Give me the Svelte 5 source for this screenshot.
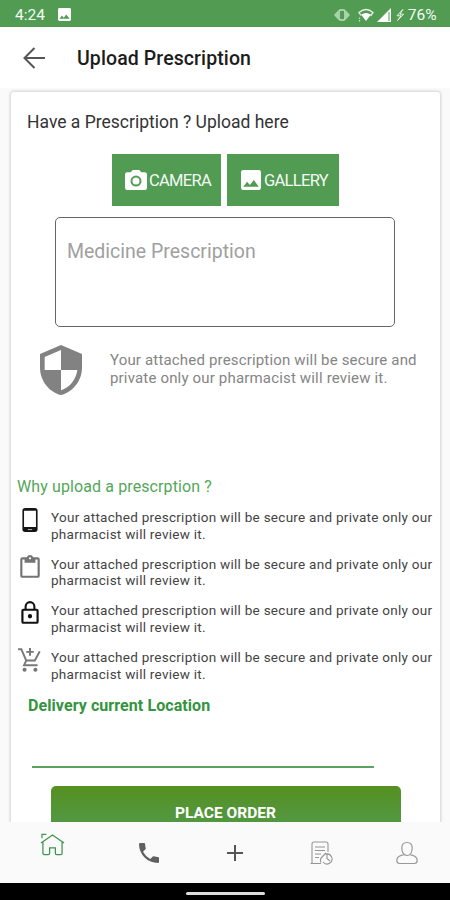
<script lang="ts">
  // Reasons listed under "Why upload"
  const reasons = ['phone', 'clipboard', 'lock', 'cart'];
  const reasonText = ['Your attached prescription will be secure and private only our', 'pharmacist will review it.'];

  let prescription = $state('');
</script>

<div class="screen">
  <header class="status">
    <span class="time">4:24</span>
    <svg class="picture" viewBox="3 3 18 18" width="13" height="13">
      <path fill="#fff" d="M21 19V5a2 2 0 0 0-2-2H5a2 2 0 0 0-2 2v14a2 2 0 0 0 2 2h14a2 2 0 0 0 2-2zM8.500 13.500l2.500 3 3.500-4.500 4.500 6H5z" />
    </svg>
    <div class="system">
      <svg class="vibrate" viewBox="0 0 16 12" width="16" height="12">
        <path fill="#a9d3aa" d="M4 1.500v9L0 6zM12 1.500v9L16 6z" />
        <rect x="5" y="1" width="6" height="10" rx="1.500" fill="none" stroke="#c5e2c5" stroke-width="1.500" />
      </svg>
      <svg class="wifi" viewBox="0 0 16 14" width="16" height="14">
        <path d="M3 7.500L1 4.500Q8-1.500 15 4.500L12.500 8" fill="none" stroke="#e4f2e4" stroke-width="1.300" />
        <path d="M3 6.500Q8 3.500 13 6.500L8 13z" fill="#fff" />
        <path d="M1.500 9.500v1.500M1.500 12v1.500" stroke="#c5e2c5" stroke-width="1.300" />
      </svg>
      <svg class="signal" viewBox="0 0 14 14" width="14" height="14">
        <path d="M14 0v14H0z" fill="#fff" />
        <path d="M12 4v9" stroke="#519b53" stroke-width="1" />
      </svg>
      <svg class="bolt" viewBox="0 0 8 12" width="8" height="12">
        <path d="M6.800.5L1 6.800h4L1.500 11.500M6.800.5L4 5.200h3.600L1.500 11.500" fill="none" stroke="#e8f5e8" stroke-width="1" />
      </svg>
      <span class="battery">76%</span>
    </div>
  </header>

  <div class="toolbar">
    <button class="back" aria-label="Back">
      <svg viewBox="0 0 22 22" width="22" height="22">
        <path d="M11.500 1L1.500 11l10 10M1.500 11H22" fill="none" stroke="#555" stroke-width="2" />
      </svg>
    </button>
    <h1>Upload Prescription</h1>
  </div>

  <main>
    <section class="card">
      <h2>Have a Prescription ? Upload here</h2>

      <div class="actions">
        <button class="camera">
          <svg viewBox="2 2 20 18" width="22" height="20">
            <path fill="#fff" fill-rule="evenodd" d="M9 2L7.200 4H4a2 2 0 0 0-2 2v12a2 2 0 0 0 2 2h16a2 2 0 0 0 2-2V6a2 2 0 0 0-2-2h-3.200L15 2zM12 17a5 5 0 1 1 0-10 5 5 0 0 1 0 10z" />
            <circle cx="12" cy="12" r="3.200" fill="#fff" />
          </svg>
          <span>CAMERA</span>
        </button>
        <button class="gallery">
          <svg viewBox="3 3 18 18" width="20" height="20">
            <path fill="#fff" d="M21 19V5a2 2 0 0 0-2-2H5a2 2 0 0 0-2 2v14a2 2 0 0 0 2 2h14a2 2 0 0 0 2-2zM8.500 13.500l2.500 3 3.500-4.500 4.500 6H5z" />
          </svg>
          <span>GALLERY</span>
        </button>
      </div>

      <textarea bind:value={prescription} placeholder="Medicine Prescription"></textarea>

      <div class="secure">
        <svg viewBox="3 1 18 22" width="42" height="50" preserveAspectRatio="none">
          <path fill="#828282" d="M12 1L3 5v6c0 5.550 3.840 10.740 9 12 5.160-1.260 9-6.450 9-12V5zm0 10.990h7c-.53 4.120-3.280 7.790-7 8.940V12H5V6.300l7-3.110z" />
        </svg>
        <p>Your attached prescription will be secure and<br />private only our pharmacist will review it.</p>
      </div>

      <h3>Why upload a prescrption ?</h3>

      <ul>
        {#each reasons as icon}
          <li>
            <svg viewBox="0 0 24 24" width="26" height="26">
              {#if icon === 'phone'}
                <path fill="#151515" fill-rule="evenodd" d="M7.500 1h9A2.500 2.500 0 0 1 19 3.500v17a2.500 2.500 0 0 1-2.500 2.500h-9A2.500 2.500 0 0 1 5 20.500v-17A2.500 2.500 0 0 1 7.500 1zM6.500 3.500v15h11v-15z" />
                <path d="M10 20.800h4" stroke="#aaa" stroke-width="1" />
              {:else if icon === 'clipboard'}
                <path fill="#747474" d="M19 3h-4.180C14.400 1.840 13.300 1 12 1s-2.400.84-2.820 2H5a2 2 0 0 0-2 2v15a2 2 0 0 0 2 2h14a2 2 0 0 0 2-2V5a2 2 0 0 0-2-2zm-7 0a1 1 0 1 1 0 2 1 1 0 0 1 0-2zm7 17H5V5h2v3h10V5h2z" />
              {:else if icon === 'lock'}
                <path fill="#111" d="M18 8h-1V6A5 5 0 0 0 7 6v2H6a2 2 0 0 0-2 2v10a2 2 0 0 0 2 2h12a2 2 0 0 0 2-2V10a2 2 0 0 0-2-2zM8.900 6a3.100 3.100 0 0 1 6.200 0v2H8.900zM18 20H6V10h12zm-6-3a2 2 0 1 0 0-4 2 2 0 0 0 0 4z" />
              {:else}
                <path d="M1 2h3l4.500 10.500h8l4.500-8.500M12 1v7M8.500 4.500h7M8.500 12.500L6.500 16.800H19" fill="none" stroke="#777" stroke-width="1.800" />
                <circle cx="7" cy="21" r="1.900" fill="#777" />
                <circle cx="17" cy="21" r="1.900" fill="#777" />
              {/if}
            </svg>
            <p>{reasonText[0]}<br />{reasonText[1]}</p>
          </li>
        {/each}
      </ul>

      <h4>Delivery current Location</h4>
      <div class="location"></div>
      <button class="order">PLACE ORDER</button>
    </section>
  </main>

  <nav>
    <a class="home" href="#home" aria-label="Home">
      <svg viewBox="0 0 26 24" width="25" height="23" fill="none" stroke="#3d9650" stroke-width="1.300">
        <path d="M1 10.500L13 2l12 8.500M2 5.500V1.500h4.500M3 9.500V21q0 1.500 1.500 1.500H8.500q1.500 0 1.500-1.500V15.500h6V21q0 1.500 1.500 1.500H21.500q1.500 0 1.500-1.500V9.500" />
      </svg>
    </a>
    <a href="#call" aria-label="Call">
      <svg viewBox="3 3 18 18" width="20" height="20">
        <path fill="#606060" d="M6.620 10.790a15.150 15.150 0 0 0 6.590 6.590l2.200-2.200a1 1 0 0 1 1.020-.24c1.120.37 2.330.57 3.570.57a1 1 0 0 1 1 1V20a1 1 0 0 1-1 1A17 17 0 0 1 3 4a1 1 0 0 1 1-1h3.500a1 1 0 0 1 1 1c0 1.250.2 2.450.57 3.570a1 1 0 0 1-.25 1.020z" />
      </svg>
    </a>
    <a href="#add" aria-label="Add">
      <svg viewBox="0 0 16 16" width="16" height="16">
        <path d="M8 0v16M0 8h16" stroke="#555" stroke-width="2" />
      </svg>
    </a>
    <a href="#orders" aria-label="Orders">
      <svg viewBox="0 0 24 24" width="24" height="24" fill="none" stroke="#969696" stroke-width="1.100">
        <path d="M12 22.500H1.500M3 22.500V3q0-2 2-2h12q2 0 2 2v8M6 6h10M6 9.500h10M6 13h6M6 16.500h4" />
        <path d="M16.500 13.200A5 5 0 1 1 14 21M18 12.500v5l3 2.500M12 21.500q-1.500-3 1-5.500l4-4" />
      </svg>
    </a>
    <a href="#profile" aria-label="Profile">
      <svg viewBox="0 0 22 24" width="22" height="24" fill="none" stroke="#999" stroke-width="1.200">
        <path d="M11 1.500c3.500 0 5.200 2 5.200 5.500 0 4.500-2 7.500-5.200 7.500S5.800 11.500 5.800 7C5.800 3.500 7.500 1.500 11 1.500zM7.500 14.200H6C2.500 15.200.8 17 .8 19.500c0 2 1 3 3 3h14.400c2 0 3-1 3-3 0-2.500-1.700-4.300-5.200-5.300h-1.500" />
      </svg>
    </a>
  </nav>

  <footer><span></span></footer>
</div>

<style>
  :global(body) {
    margin: 0;
  }

  * {
    box-sizing: border-box;
  }

  .screen {
    width: 450px;
    height: 900px;
    display: flex;
    flex-direction: column;
    overflow: hidden;
    background: #fafafa;
    font-family: Roboto, "Noto Sans", sans-serif;
    color: #222;
  }

  h1, h2, h3, h4, p, ul {
    margin: 0;
    padding: 0;
    font-weight: 400;
    white-space: nowrap;
  }

  button {
    border: 0;
    padding: 0;
    font-family: inherit;
  }

  svg {
    display: block;
    flex: none;
  }

  /* Status bar */
  .status {
    height: 27px;
    flex: none;
    display: flex;
    align-items: center;
    padding: 2px 13.500px 0 15px;
    background: #519b53;
    color: #f3faf3;
    font-size: 15.500px;
  }

  .time {
    width: 43px;
  }

  .system {
    display: flex;
    align-items: center;
    margin-left: auto;
  }

  .wifi {
    margin-left: 8px;
  }

  .signal {
    margin-left: 3px;
  }

  .bolt {
    margin: 0 4px 0 5px;
  }

  /* Toolbar */
  .toolbar {
    height: 61px;
    flex: none;
    display: flex;
    align-items: center;
    padding-left: 24px;
    background: #fff;
  }

  .back {
    width: 53px;
    background: none;
  }

  .back svg {
    margin-left: -1px;
  }

  h1 {
    font-size: 19.500px;
    font-weight: 500;
    line-height: 24px;
    letter-spacing: 0.100px;
    padding-top: 2px;
    color: #1c1c1c;
  }

  /* Prescription card */
  main {
    flex: 1;
    min-height: 0;
    padding: 4px 10px 0 11px;
    overflow: hidden;
  }

  .card {
    height: 800px;
    padding-top: 20px;
    background: #fff;
    border-radius: 3px;
    box-shadow: 0 0 3px 1px rgba(0, 0, 0, 0.16);
  }

  h2 {
    margin-left: 16px;
    font-size: 17.500px;
    line-height: 20px;
    color: #333;
  }

  .actions {
    display: flex;
    gap: 6px;
    margin: 22px 0 0 101px;
  }

  .actions button {
    height: 52px;
    display: flex;
    align-items: center;
    color: #f4faf4;
    background: #519b53;
    font-size: 16.500px;
    letter-spacing: -0.700px;
  }

  .actions span {
    padding-top: 1px;
  }

  .camera {
    width: 109px;
    padding-left: 13px;
    gap: 2px;
  }

  .gallery {
    width: 112px;
    padding-left: 14px;
    gap: 3px;
  }

  textarea {
    display: block;
    width: 340px;
    height: 110px;
    margin: 11px 0 0 44px;
    padding: 22px 11px;
    border: 1px solid #666;
    border-radius: 5px;
    resize: none;
    outline: none;
    background: #fff;
    font-family: inherit;
    font-size: 19.500px;
    line-height: 24px;
  }

  textarea::placeholder {
    color: #a0a0a0;
    opacity: 1;
  }

  .secure {
    height: 50px;
    display: flex;
    align-items: center;
    gap: 28px;
    margin: 18px 0 0 29px;
  }

  .secure p {
    padding-bottom: 2px;
    font-size: 15px;
    line-height: 18px;
    letter-spacing: 0.170px;
    color: #858585;
  }

  h3 {
    margin: 82px 0 0 6px;
    font-size: 16px;
    line-height: 20px;
    letter-spacing: 0.110px;
    color: #55a65a;
  }

  ul {
    margin-top: 10px;
    list-style: none;
  }

  li {
    height: 46.700px;
    display: flex;
    padding-left: 6px;
    gap: 8px;
  }

  li p {
    padding-top: 2px;
    font-size: 13.500px;
    line-height: 16.500px;
    letter-spacing: 0.270px;
    color: #444;
  }

  h4 {
    margin: 2px 0 0 17px;
    font-size: 16px;
    font-weight: 700;
    line-height: 20px;
    letter-spacing: 0.080px;
    color: #349440;
  }

  .location {
    width: 342px;
    height: 52px;
    margin-left: 21px;
    border-bottom: 2px solid #5aa363;
  }

  .order {
    display: block;
    width: 350px;
    height: 54px;
    margin: 18px 0 0 39.500px;
    padding-top: 1px;
    border-radius: 5px;
    background: linear-gradient(#559020, #519b53);
    color: #fff;
    font-size: 15.500px;
    font-weight: 700;
  }

  /* Bottom tabs */
  nav {
    height: 61px;
    flex: none;
    display: flex;
    background: #fafafa;
  }

  nav a {
    width: 86px;
    display: flex;
    align-items: center;
    justify-content: center;
  }

  nav .home {
    width: 105.500px;
    padding-bottom: 17px;
  }

  footer {
    height: 17px;
    flex: none;
    display: flex;
    justify-content: center;
    align-items: center;
    padding-top: 3px;
    background: #000;
  }

  footer span {
    width: 79px;
    height: 3px;
    border-radius: 2px;
    background: #ddd;
  }
</style>
